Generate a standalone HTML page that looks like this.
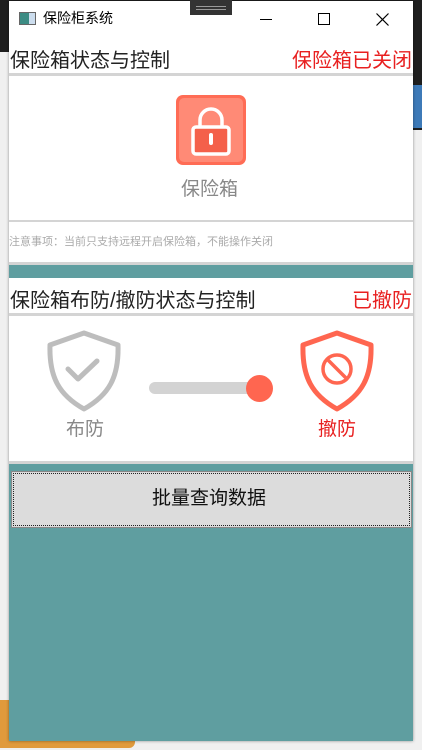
<!DOCTYPE html>
<html><head><meta charset="utf-8"><style>
*{margin:0;padding:0;box-sizing:border-box}
body{width:422px;height:750px;overflow:hidden;background:#f0f0f0;position:relative;font-family:"Liberation Sans","Noto Sans CJK SC",sans-serif}
.abs{position:absolute}
.t{white-space:nowrap;line-height:1}
</style></head><body>
<div class="abs" style="left:0;top:0;width:422px;height:52px;background:#1e1e1e"></div>
<div class="abs" style="left:413px;top:0;width:9px;height:130px;background:#1e1e1e"></div>
<div class="abs" style="left:413px;top:85px;width:9px;height:43px;background:#3d7ab8"></div>
<div class="abs" style="left:0;top:700px;width:135px;height:48px;background:#e09a3c;border-radius:0 0 6px 0"></div>
<div class="abs" style="left:9px;top:1px;width:404px;height:740px;background:#5f9ea0;box-shadow:0 0 3px rgba(0,0,0,.4)"></div>
<!-- title bar -->
<div class="abs" style="left:9px;top:1px;width:404px;height:37px;background:#fff"></div>
<div class="abs" style="left:19px;top:12px;width:17px;height:13px;border:1px solid #666;background:linear-gradient(90deg,#3c8c84 60%,#cde 60%)"></div>
<div class="abs t" style="left:43px;top:11px;font-size:14px;color:#000">保险柜系统</div>
<div class="abs" style="left:190px;top:0;width:42px;height:15px;background:#333"></div>
<div class="abs" style="left:196px;top:6px;width:30px;height:1px;background:#999"></div>
<div class="abs" style="left:196px;top:9px;width:30px;height:1px;background:#999"></div>
<div class="abs" style="left:260px;top:19px;width:12px;height:1px;background:#000"></div>
<div class="abs" style="left:318px;top:13px;width:12px;height:12px;border:1px solid #000"></div>
<svg class="abs" style="left:376px;top:13px" width="13" height="13"><path d="M0.5 0.5L12.5 12.5M12.5 0.5L0.5 12.5" stroke="#000" stroke-width="1.2"/></svg>
<!-- section 1 -->
<div class="abs" style="left:9px;top:38px;width:404px;height:228px;background:#fff"></div>
<div class="abs t" style="left:10px;top:51px;font-size:20px;color:#222">保险箱状态与控制</div>
<div class="abs t" style="right:10px;top:51px;font-size:20px;color:#e82020">保险箱已关闭</div>
<div class="abs" style="left:9px;top:73px;width:404px;height:3px;background:#d4d4d4"></div>
<div class="abs" style="left:176px;top:95px;width:70px;height:70px;border-radius:7px;background:#ff6c55"></div>
<div class="abs" style="left:179px;top:98px;width:64px;height:64px;border-radius:5px;background:#ff8a76"></div>
<svg class="abs" style="left:176px;top:95px" width="70" height="70"><rect x="17" y="32" width="36" height="27" rx="3" fill="#f4604a" stroke="#fff" stroke-width="3.5"/><path d="M24 32V25a11 11 0 0 1 22 0v7" fill="none" stroke="#fff" stroke-width="3.5"/><rect x="33" y="38" width="4" height="12" rx="2" fill="#fff"/></svg>
<div class="abs t" style="left:181px;top:180px;font-size:19px;color:#888">保险箱</div>
<div class="abs" style="left:9px;top:220px;width:404px;height:2px;background:#d4d4d4"></div>
<div class="abs t" style="left:9px;top:237px;font-size:11px;color:#aaa">注意事项：当前只支持远程开启保险箱，不能操作关闭</div>
<div class="abs" style="left:9px;top:262px;width:404px;height:3px;background:#d4d4d4"></div>
<div class="abs" style="left:9px;top:265px;width:404px;height:13px;background:#5f9ea0"></div>
<!-- section 2 -->
<div class="abs" style="left:9px;top:278px;width:404px;height:183px;background:#fff"></div>
<div class="abs t" style="left:10px;top:291px;font-size:20px;color:#222">保险箱布防/撤防状态与控制</div>
<div class="abs t" style="right:10px;top:291px;font-size:20px;color:#e82020">已撤防</div>
<div class="abs" style="left:9px;top:313px;width:404px;height:3px;background:#d4d4d4"></div>
<svg class="abs" style="left:45px;top:329px" width="78" height="84"><path d="M39 4L73 16C74 48 64 66 39 80C14 66 4 48 5 16Z" fill="none" stroke="#bdbdbd" stroke-width="5" stroke-linejoin="round"/><path d="M23 40L33 50L52 32" fill="none" stroke="#bdbdbd" stroke-width="5" stroke-linecap="round" stroke-linejoin="round"/></svg>
<svg class="abs" style="left:298px;top:329px" width="78" height="84"><path d="M39 4L73 16C74 48 64 66 39 80C14 66 4 48 5 16Z" fill="none" stroke="#ff6650" stroke-width="5" stroke-linejoin="round"/><circle cx="39" cy="40" r="14" fill="none" stroke="#ff6650" stroke-width="3.5"/><path d="M30 31L48 49" stroke="#ff6650" stroke-width="3.5"/></svg>
<div class="abs" style="left:149px;top:382px;width:112px;height:12px;border-radius:6px;background:#d3d3d3"></div>
<div class="abs" style="left:246px;top:375px;width:27px;height:27px;border-radius:50%;background:#ff6650"></div>
<div class="abs t" style="left:66px;top:420px;font-size:19px;color:#888">布防</div>
<div class="abs t" style="left:318px;top:420px;font-size:19px;color:#e82020">撤防</div>
<div class="abs" style="left:9px;top:461px;width:404px;height:3px;background:#d4d4d4"></div>
<!-- button -->
<div class="abs" style="left:11px;top:471px;width:401px;height:57px;background:#dcdcdc;border:1px solid #888"></div>
<div class="abs" style="left:13px;top:473px;width:397px;height:53px;border:1px dotted #222"></div>
<div class="abs t" style="left:152px;top:489px;font-size:19px;color:#111">批量查询数据</div>
</body></html>
